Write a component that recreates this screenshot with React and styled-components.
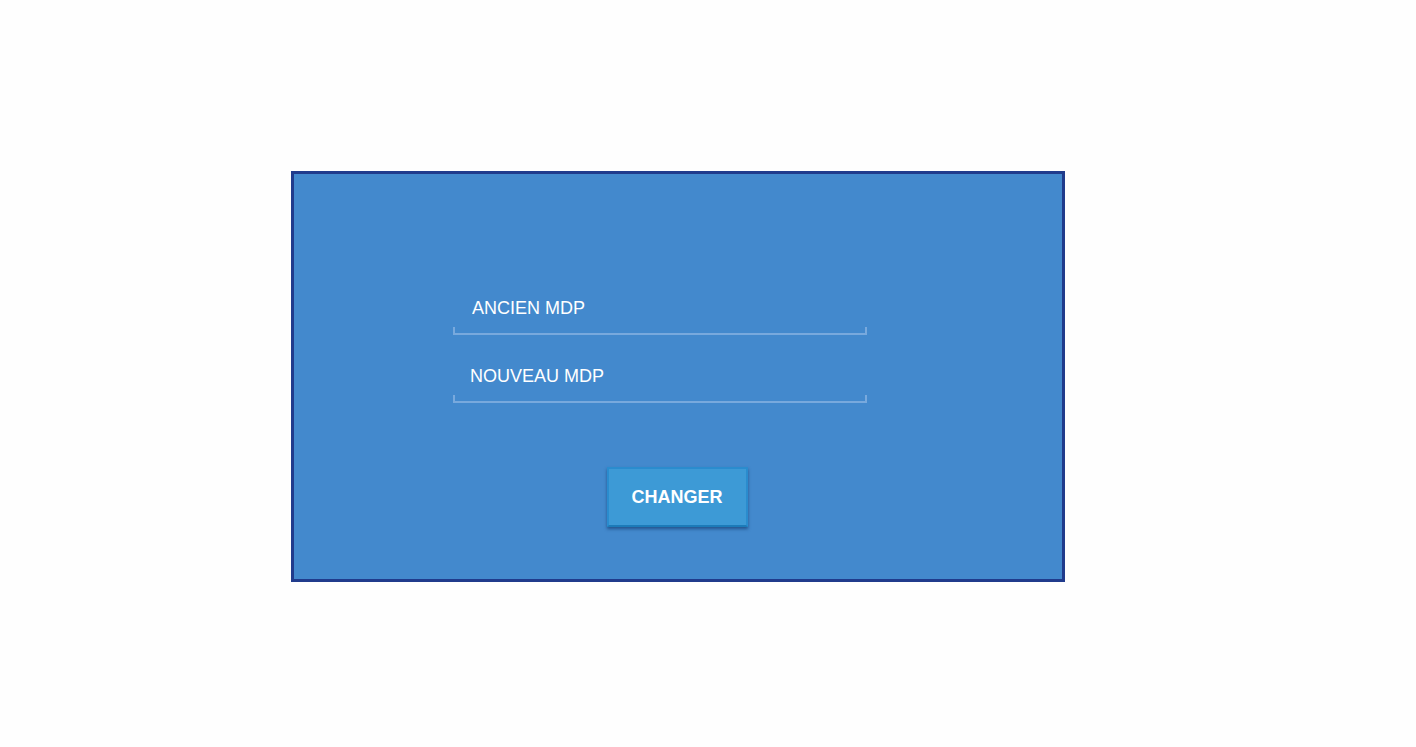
import React from "react";
import styled, { createGlobalStyle } from "styled-components";

const GlobalStyle = createGlobalStyle`
  body {
    margin: 0;
    background: #fefefe;
    font-family: "Liberation Sans", Arial, sans-serif;
  }
`;

const Page = styled.div`
  padding: 171px 0 0 291px;
`;

const Card = styled.form`
  width: 774px;
  height: 411px;
  box-sizing: border-box;
  background: #4389cd;
  border: 3px solid #203b8c;
  display: flex;
  flex-direction: column;
  align-items: center;
  padding-top: 121px;
`;

const Fields = styled.div`
  width: 414px;
  margin-left: -36px;
  display: flex;
  flex-direction: column;
  gap: 28px;
`;

const Field = styled.div`
  position: relative;
  border-bottom: 2px solid #78a9dd;

  &::before,
  &::after {
    content: "";
    position: absolute;
    bottom: -2px;
    width: 2px;
    height: 8px;
    background: #78a9dd;
  }
  &::before {
    left: 0;
  }
  &::after {
    right: 0;
  }
`;

const Input = styled.input`
  display: block;
  width: 100%;
  height: 38px;
  box-sizing: border-box;
  border: none;
  outline: none;
  background: transparent;
  padding: 0 0 12px ${(p) => p.$indent}px;
  font-family: "Liberation Sans", Arial, sans-serif;
  font-size: 18px;
  color: #fff;

  &::placeholder {
    color: #fff;
    opacity: 1;
  }
`;

const Button = styled.button`
  margin-top: 64px;
  margin-right: 2px;
  width: 141px;
  height: 60px;
  background: #3d9ad6;
  border: 2px solid #2a8cce;
  border-bottom-color: #1c7bb9;
  box-shadow: 0 2px 3px rgba(10, 40, 90, 0.55);
  color: #fff;
  font-family: "Liberation Sans", Arial, sans-serif;
  font-weight: bold;
  font-size: 18px;
  cursor: pointer;
`;

export default function App() {
  return (
    <>
      <GlobalStyle />
      <Page>
        <Card onSubmit={(e) => e.preventDefault()}>
          <Fields>
            <Field>
              <Input type="password" placeholder="ANCIEN MDP" $indent={19} />
            </Field>
            <Field>
              <Input type="password" placeholder="NOUVEAU MDP" $indent={17} />
            </Field>
          </Fields>
          <Button type="submit">CHANGER</Button>
        </Card>
      </Page>
    </>
  );
}
